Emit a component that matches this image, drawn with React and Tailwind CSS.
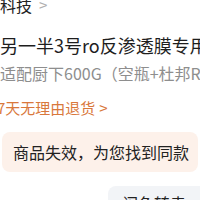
import React from "react";

export default function App() {
  return (
    <div
      className="w-[200px] h-[200px] overflow-hidden bg-white"
      style={{ fontFamily: '"Noto Sans CJK SC", "Noto Sans", sans-serif' }}
    >
      <div className="mt-[-6px] flex items-center gap-[7px] text-[16px] leading-[22px] text-[#222]">
        <span>科技</span>
        <span className="text-[#b0b0b0] text-[15px]">&gt;</span>
      </div>
      <div className="mt-[17px] whitespace-nowrap text-[18px] leading-[24px] text-[#1e1e1e]">
        另一半3号ro反渗透膜专用滤芯
      </div>
      <div className="mt-[4px] whitespace-nowrap text-[16px] leading-[24px] text-[#8e8e8e]">
        适配厨下600G（空瓶+杜邦RO膜）
      </div>
      <div className="mt-[12px] ml-[-3px] flex items-center gap-[4px] whitespace-nowrap text-[15px] leading-[22px] text-[#d9783c]">
        <span>7天无理由退货</span>
        <span>&gt;</span>
      </div>
      <div className="mx-[2px] mt-[13px] flex h-[40px] items-center overflow-hidden whitespace-nowrap rounded-[8px] bg-[#fdf1ea] pl-[11px] text-[16px] text-[#222]">
        商品失效，为您找到同款
      </div>
      <div className="mt-[14px] flex justify-end">
        <div className="w-[92px] rounded-tl-[8px] bg-[#f2f4f7] px-[14px] pt-[6px] whitespace-nowrap text-[16px] leading-[22px] text-[#222]">
          闲鱼转卖
        </div>
      </div>
    </div>
  );
}
